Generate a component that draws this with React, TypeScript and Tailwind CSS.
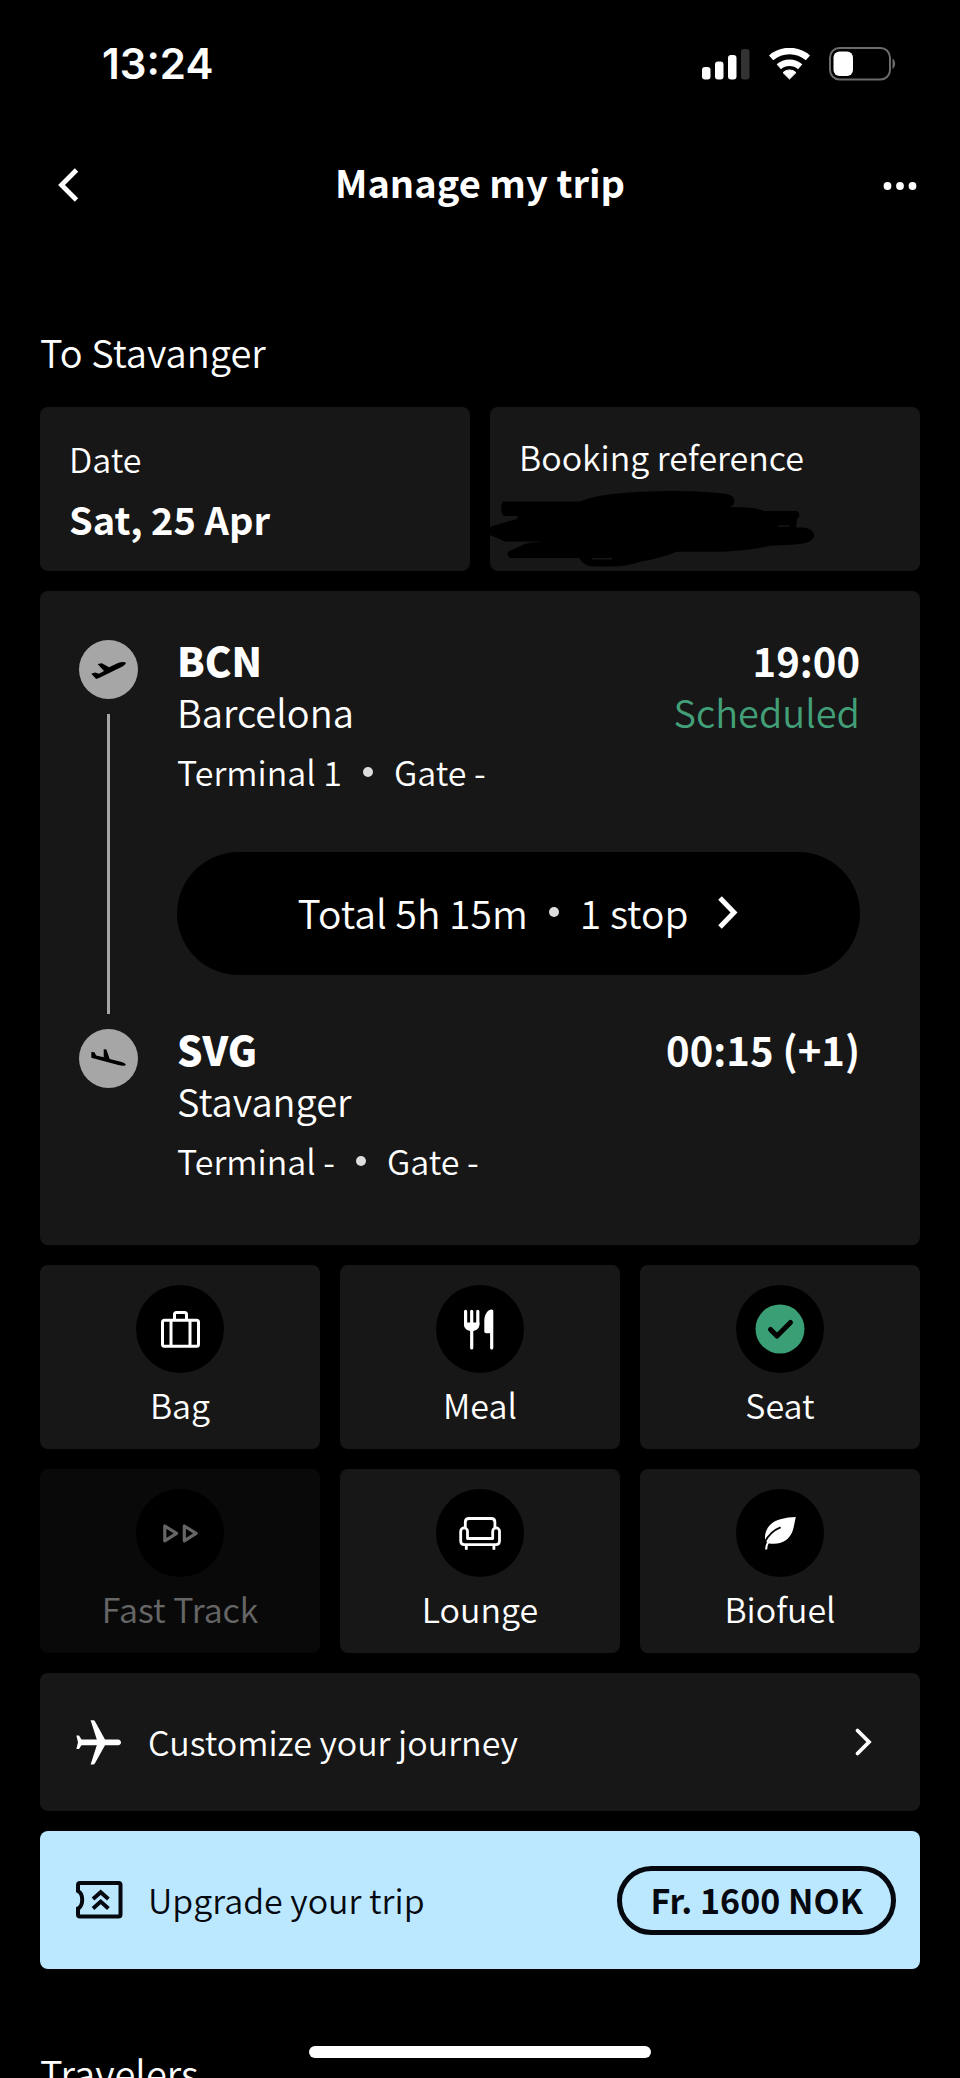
import type { ReactNode } from "react";

const StatusBar = () => {
    return (
        <div className="flex h-32 shrink-0 items-center justify-between pl-[102px] pr-16">
            <span className="font-['Inter',sans-serif] text-[42px] font-semibold leading-[48px]">13:24</span>
            <div className="flex items-center gap-[19px]">
                {/* Signal */}
                <svg width="48" height="32" viewBox="0 0 48 32" fill="white" aria-hidden="true">
                    <rect x="0" y="19" width="8.5" height="12.5" rx="3" />
                    <rect x="13" y="13.5" width="8.5" height="18" rx="3" />
                    <rect x="26" y="7" width="8.5" height="24.5" rx="3" />
                    <rect x="39" y="1" width="8.5" height="30.5" rx="3" fill="#333333" />
                </svg>
                {/* Wifi */}
                <svg width="41" height="32" viewBox="0 0 41 32" fill="none" stroke="white" strokeWidth="6.5" aria-hidden="true">
                    <path d="M2.1 9.9A28 28 0 0 1 38.9 9.9" />
                    <path d="M9.8 18.7A16.3 16.3 0 0 1 31.2 18.7" />
                    <path d="M20.5 31L14 24.6A9.2 9.2 0 0 1 27 24.6Z" fill="white" stroke="white" strokeWidth="1" strokeLinejoin="round" />
                </svg>
                {/* Battery */}
                <svg width="67" height="34" viewBox="0 0 67 34" fill="none" aria-hidden="true">
                    <rect x="1" y="1" width="60" height="31.5" rx="9.5" stroke="#6b6b6b" strokeWidth="2" />
                    <rect x="4.5" y="4.5" width="19.5" height="24.5" rx="6" fill="white" />
                    <path d="M63.5 11.5C67 13.5 67 20 63.5 22Z" fill="#6b6b6b" />
                </svg>
            </div>
        </div>
    );
};

const Header = () => {
    return (
        <header className="grid h-28 shrink-0 grid-cols-[1fr_auto_1fr] items-center px-10">
            <button type="button" aria-label="Back" className="justify-self-start">
                <svg width="48" height="48" viewBox="0 0 48 48" fill="none" stroke="white" strokeWidth="4.8">
                    <path d="M36.5 10L21.5 25L36.5 40" />
                </svg>
            </button>
            <h1 className="pb-1 text-[38px] font-bold leading-[48px]">Manage my trip</h1>
            <button type="button" aria-label="More options" className="justify-self-end">
                <svg width="48" height="48" viewBox="0 0 48 48" fill="white">
                    <circle cx="15.5" cy="26" r="3.9" />
                    <circle cx="28" cy="26" r="3.9" />
                    <circle cx="40.5" cy="26" r="3.9" />
                </svg>
            </button>
        </header>
    );
};

const Dot = () => <span className="size-[10px] rounded-full bg-[#dddddd]" />;

type StopProps = {
    code: string;
    city: string;
    time: string;
    status?: string;
    terminal: string;
    gate: string;
};

const Stop = ({ code, city, time, status, terminal, gate }: StopProps) => {
    return (
        <div>
            <div className="flex justify-between text-[40px] leading-[52px]">
                <h3 className="font-black">{code}</h3>
                <span className="font-bold">{time}</span>
            </div>
            <div className="flex justify-between text-[38px] leading-[52px]">
                <span>{city}</span>
                {status && <span className="text-[#429f77]">{status}</span>}
            </div>
            <div className="mt-3 flex items-center gap-[21px] text-[34px] leading-[44px]">
                <span>Terminal {terminal}</span>
                <Dot />
                <span>Gate {gate}</span>
            </div>
        </div>
    );
};

const RailMarker = ({ d }: { d: string }) => {
    return (
        <svg width="59" height="59" viewBox="0 0 59 59" className="shrink-0 rounded-full bg-[#a6a6a6]" aria-hidden="true">
            <path d={d} fill="black" />
        </svg>
    );
};

const Journey = () => {
    return (
        <section className="flex gap-[39px] rounded-lg bg-[#171717] pb-[62px] pl-[39px] pr-[60px] pt-[43px]">
            <div className="flex flex-col items-center gap-[15px] pb-[95px] pt-1.5">
                <RailMarker d="M46.7 22.5C45 21.6 42 21.8 39 23L30 27.3L23 23.2L18.6 24L25 31L20 33.8L16 32.6L12.3 33.8L17.2 38.9L21 37.4L43.5 26.4C46 25 47.2 23.6 46.7 22.5Z" />
                <div className="w-[3px] flex-1 bg-[#a6a6a6]" />
                <RailMarker d="M12.3 23L15.4 23.3L17.2 26.4L24.7 28.3L24.7 20.2L27.4 20.6L30.7 30L42.7 33C45.5 33.8 47 35 46.7 36C46.3 37.2 42.5 36.9 39.3 36.1L12.3 28.8Z" />
            </div>
            <div className="flex-1">
                <Stop code="BCN" city="Barcelona" time="19:00" status="Scheduled" terminal="1" gate="-" />
                <button type="button" className="mb-12 mt-[58px] flex h-[123px] w-full items-center justify-center gap-[21px] rounded-full bg-black pb-1 text-[39px] leading-[48px]">
                    <span>Total 5h 15m</span>
                    <Dot />
                    <span>1 stop</span>
                    <svg width="30" height="36" viewBox="0 0 30 36" fill="none" stroke="white" strokeWidth="5" aria-hidden="true">
                        <path d="M11 4L25 18.5L11 33" />
                    </svg>
                </button>
                <Stop code="SVG" city="Stavanger" time="00:15 (+1)" terminal="-" gate="-" />
            </div>
        </section>
    );
};

const extras: { label: string; disabled?: boolean; icon: ReactNode }[] = [
    {
        label: "Bag",
        icon: (
            <g strokeWidth="3">
                <rect x="26.5" y="35.2" width="36" height="26" rx="2" />
                <path d="M35 35V61M54 35V61M38.5 35V29.5Q38.5 27.5 40.5 27.5H48.5Q50.5 27.5 50.5 29.5V35" />
            </g>
        ),
    },
    {
        label: "Meal",
        icon: (
            <g>
                <path d="M29.6 26.3V39M35.7 26.3V63M41.8 26.3V39" strokeWidth="3.2" strokeLinecap="round" />
                <path d="M28 37.5H43.4V39.5C43.4 43.5 40.3 46 35.7 46S28 43.5 28 39.5Z" fill="white" stroke="none" />
                <path
                    d="M57.3 26V63Q57.3 64.6 55.7 64.6T54.1 63V48.3H50Q48.3 48.3 48.3 46.6V36C48.3 29 52 24.5 55.6 24.5Q57.3 24.5 57.3 26Z"
                    fill="white"
                    stroke="none"
                />
            </g>
        ),
    },
    {
        label: "Seat",
        icon: (
            <g>
                <circle cx="44" cy="44" r="24.5" fill="#3a9f74" stroke="none" />
                <path d="M34.5 44.5L41 51L54.5 37.5" stroke="black" strokeWidth="5" strokeLinecap="round" />
            </g>
        ),
    },
    {
        label: "Fast Track",
        disabled: true,
        icon: <path d="M28.8 37V51.8L40.6 44.4ZM48.3 37V51.8L60.1 44.4Z" strokeWidth="3.2" />,
    },
    {
        label: "Lounge",
        icon: (
            <g strokeWidth="2.8">
                <path d="M31.5 49.5V42.3A3.4 3.4 0 0 0 24.7 42.3V52Q24.7 55.7 28.4 55.7H59.8Q63.5 55.7 63.5 52V42.3A3.4 3.4 0 0 0 56.7 42.3V49.5Z" />
                <path d="M29.3 38.5V33.2Q29.3 29.5 33 29.5H55.2Q58.9 29.5 58.9 33.2V38.5" />
                <path d="M30.3 56V60.8M57.9 56V60.8" />
            </g>
        ),
    },
    {
        label: "Biofuel",
        icon: (
            <g>
                <path
                    d="M59.8 28C50 28.5 39.5 30 34 36C29.8 40.5 28.3 46 29.2 51L32 54.2C44 56.5 52 52 56 43.5C58 39 58.5 33 59.8 28Z"
                    fill="white"
                    stroke="none"
                />
                <path d="M28.5 53.5C32.5 46 38 41 44 38.7" stroke="black" strokeWidth="1.8" strokeLinecap="round" />
                <path d="M30.2 60.6C30.2 57 31 54 34 51" strokeWidth="2" />
            </g>
        ),
    },
];

const Extras = () => {
    return (
        <div className="grid grid-cols-3 gap-5">
            {extras.map(({ label, disabled, icon }) => (
                <button
                    key={label}
                    type="button"
                    disabled={disabled}
                    className="flex flex-col items-center gap-2 rounded-lg bg-[#171717] py-5 text-[34px] leading-[48px] disabled:opacity-40"
                >
                    <svg width="88" height="88" viewBox="0 0 88 88" fill="none" stroke="white" strokeLinejoin="round" className="rounded-full bg-black" aria-hidden="true">
                        {icon}
                    </svg>
                    <span>{label}</span>
                </button>
            ))}
        </div>
    );
};

const App = () => {
    return (
        <div className="flex h-screen flex-col overflow-hidden bg-black font-['Noto_Sans_CJK_SC',sans-serif] font-[350] text-white">
            <StatusBar />
            <Header />

            <main className="flex flex-col gap-5 px-10 pt-[88px]">
                <h2 className="mb-[11px] text-[38px] leading-[48px]">To Stavanger</h2>

                {/* Date and booking reference */}
                <div className="grid grid-cols-2 gap-5">
                    <div className="flex flex-col gap-[14px] rounded-lg bg-[#171717] px-[29px] pb-7 pt-[30px]">
                        <span className="text-[34px] leading-[44px]">Date</span>
                        <span className="text-[38px] font-bold leading-[48px]">Sat, 25 Apr</span>
                    </div>
                    <div className="relative rounded-lg bg-[#171717] px-[29px] py-7">
                        <span className="text-[34px] leading-[44px]">Booking reference</span>
                        <svg width="330" height="164" viewBox="0 0 330 164" className="absolute left-0 top-0" aria-hidden="true">
                            <path d="M13 94.5H90C102 90 112 88 123 87C150 84 185 83 215 85C228 86 240 86 243 90C246 94 244 98 240 100C252 100 264 100 274 104H305C310 104 311 109 307 112L306 120.5C315 120 322 121 324 127C325 133 318 137 305 137.5L280 138.7C266 142 250 144 230 144.7H187C176 149 165 152 150 154.7C140 158 130 160 118 159.5H103C97 159 92 156 89 151H20C17 149 17 146 19 144C26 142 32 137 40 135.7L54 134.5H15L0 128V119.7L27 112L28 109H14C10 107 11 97 13 94.5Z" />
                            <path d="M102 151.8H122M288 119.3L299 118.8" stroke="#171717" strokeWidth="1.6" />
                        </svg>
                    </div>
                </div>

                <Journey />
                <Extras />

                <button type="button" className="flex h-[138px] items-center gap-6 rounded-lg bg-[#171717] pl-9 pr-12 text-[34px] leading-[48px]">
                    <svg width="48" height="48" viewBox="0 0 48 48" fill="white" aria-hidden="true">
                        <path d="M42 21.4C46 21.8 46 26.9 42 27.3H29L18.8 45.5Q18.3 46.4 17.3 46.4H14.6L20.8 27.3H5.5L3 31H0.4L2 24.3L0.4 17.6H3L5.5 21.4H20.8L14.6 2.2H17.3Q18.3 2.2 18.8 3.1L29 21.4Z" />
                    </svg>
                    <span className="flex-1 text-left">Customize your journey</span>
                    <svg width="18" height="30" viewBox="0 0 18 30" fill="none" stroke="white" strokeWidth="3.8" strokeLinecap="round" aria-hidden="true">
                        <path d="M3.5 3.5L15 15L3.5 26.5" />
                    </svg>
                </button>

                <button type="button" className="flex h-[138px] items-center gap-6 rounded-lg bg-[#bce8ff] pl-9 pr-6 text-[34px] leading-[48px] text-[#05090f]">
                    <svg width="48" height="48" viewBox="0 0 48 48" fill="none" stroke="currentColor" strokeWidth="4" aria-hidden="true">
                        <path d="M4 7H42.5Q44.5 7 44.5 9V38.5Q44.5 40.5 42.5 40.5H4Q2 40.5 2 38.5V32.5C5 31 6.2 27.5 6.2 23.7S5 16.5 2 15V9Q2 7 4 7Z" />
                        <path d="M17 23L24.7 16.2L32.4 23M17 32.4L24.7 25.6L32.4 32.4" />
                    </svg>
                    <span className="flex-1 text-left">Upgrade your trip</span>
                    <span className="rounded-full border-[5px] border-current px-7 pb-[6px] pt-[5px] font-bold">Fr. 1600 NOK</span>
                </button>

                <h2 className="pt-[60px] text-[38px] leading-[48px]">Travelers</h2>
            </main>

            {/* Home indicator */}
            <div className="fixed inset-x-0 bottom-5 mx-auto h-3 w-[342px] rounded-full bg-white" />
        </div>
    );
};

export default App;
